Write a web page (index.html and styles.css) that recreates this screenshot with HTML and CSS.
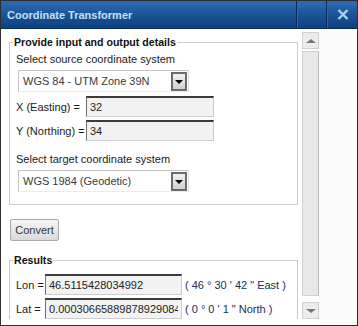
FILE: index.html
```html
<!DOCTYPE html>
<html lang="en">
<head>
    <meta charset="UTF-8">
    <meta name="viewport" content="width=device-width, initial-scale=1.0">
    <title>Coordinate Transformer</title>
    <link rel="stylesheet" href="styles.css">
</head>
<body>
    <div class="dialog">
        <div class="titlebar">
            <span class="title">Coordinate Transformer</span>
            <span class="tb-blank"></span>
            <span class="tb-close">
                <svg width="12" height="11" viewBox="0 0 12 11">
                    <path d="M1.5 1 L10.5 10 M10.5 1 L1.5 10" stroke="#a9d0f0" stroke-width="2.4" fill="none"/>
                </svg>
            </span>
        </div>
        <div class="dialog-body">
            <div class="pane">
                <fieldset class="group">
                    <legend>Provide input and output details</legend>
                    <div class="label">Select source coordinate system</div>
                    <div class="select">
                        <span class="select-text">WGS 84 - UTM Zone 39N</span>
                        <span class="drop"></span>
                    </div>
                    <div class="row">
                        <span class="row-label">X (Easting) =</span>
                        <input class="field" type="text" value="32">
                    </div>
                    <div class="row">
                        <span class="row-label">Y (Northing) =</span>
                        <input class="field" type="text" value="34">
                    </div>
                    <div class="label label-gap">Select target coordinate system</div>
                    <div class="select">
                        <span class="select-text">WGS 1984 (Geodetic)</span>
                        <span class="drop"></span>
                    </div>
                </fieldset>

                <button class="btn">Convert</button>

                <fieldset class="group results">
                    <legend>Results</legend>
                    <div class="row res-row">
                        <span class="row-label">Lon =</span>
                        <input class="field" type="text" value="46.5115428034992">
                        <span class="dms">( 46 ° 30 ' 42 " East )</span>
                    </div>
                    <div class="row res-row">
                        <span class="row-label">Lat =</span>
                        <input class="field" type="text" value="0.00030665889878929084">
                        <span class="dms">( 0 ° 0 ' 1 " North )</span>
                    </div>
                </fieldset>
            </div>
            <div class="scrollbar">
                <div class="sb-btn"><span class="sb-up"></span></div>
                <div class="sb-thumb"></div>
                <div class="sb-btn sb-bottom"><span class="sb-down"></span></div>
            </div>
            <div class="side"></div>
        </div>
    </div>
</body>
</html>
```
FILE: styles.css
```css
body {
    margin: 0;
    padding: 0;
    font-family: "Liberation Sans", Arial, sans-serif;
    font-size: 11px;
    color: #1a1a1a;
    background-color: #fff;
}
.dialog {
    width: 358px;
    height: 326px;
    box-sizing: border-box;
    border: 1px solid #2f2f2f;
    display: flex;
    flex-direction: column;
    background-color: #fff;
}

/* title bar */
.titlebar {
    height: 27px;
    display: flex;
    align-items: stretch;
    background: linear-gradient(#2c6db3, #1a5598 50%, #0f407f);
    border-bottom: 1px solid #0b2c57;
}
.title {
    flex: 1;
    display: flex;
    align-items: center;
    padding-left: 6px;
    font-size: 11px;
    font-weight: bold;
    color: #c3e0f8;
}
.tb-blank {
    width: 29px;
    border-left: 1px solid #0a2a52;
    box-shadow: inset 1px 0 0 #2f6aa6;
}
.tb-close {
    width: 28px;
    border-left: 1px solid #0a2a52;
    box-shadow: inset 1px 0 0 #2f6aa6;
    display: flex;
    align-items: center;
    justify-content: center;
    padding-left: 2px;
}

/* body */
.dialog-body {
    flex: 1;
    display: flex;
}
.pane {
    width: 300px;
    height: 290px;
    overflow: hidden;
    padding-top: 7px;
    box-sizing: border-box;
}
.group {
    margin: 0 0 0 8px;
    width: 289px;
    box-sizing: border-box;
    border: 1px solid #cbcbcb;
    padding: 4px 6px 8px 6px;
}
.group legend {
    font-weight: bold;
    font-size: 10.6px;
    line-height: 13px;
    padding: 0 1px;
    margin-left: -3px;
    color: #111;
}
.label {
    line-height: 13px;
    margin-bottom: 4px;
}
.label-gap {
    margin-top: 12px;
}
.select {
    margin-left: 2px;
    width: 171px;
    height: 22px;
    box-sizing: border-box;
    border: 1px solid #c4c4c4;
    border-bottom-color: #ececec;
    border-right-color: #dcdcdc;
    display: flex;
    align-items: center;
    justify-content: space-between;
    padding: 0 1px 0 4px;
    margin-bottom: 4px;
}
.select-text {
    color: #3a3a3a;
}
.drop {
    width: 16px;
    height: 19px;
    box-sizing: border-box;
    border: 2px solid #6a6a6a;
    background: linear-gradient(#f2f2f2, #cfcfcf);
    position: relative;
}
.drop::after {
    content: "";
    position: absolute;
    left: 2px;
    top: 6px;
    border-left: 4px solid transparent;
    border-right: 4px solid transparent;
    border-top: 4px solid #000;
}
.row {
    display: flex;
    align-items: center;
    height: 21px;
    margin-bottom: 3px;
}
.row-label {
    width: 70px;
    flex-shrink: 0;
}
.field {
    width: 128px;
    height: 21px;
    box-sizing: border-box;
    margin: 0;
    padding: 0 3px;
    font-family: "Liberation Sans", Arial, sans-serif;
    font-size: 11px;
    color: #222;
    background-color: #f2f2f2;
    border: 1px solid #cdcdcd;
    border-top: 2px solid #3a3a3a;
    border-left-color: #6f6f6f;
    outline: none;
}
.btn {
    display: block;
    margin: 14px 0 0 9px;
    width: 49px;
    height: 22px;
    padding: 0;
    font-family: "Liberation Sans", Arial, sans-serif;
    font-size: 11px;
    color: #333;
    background: linear-gradient(#f6f6f6, #dadada);
    border: 1px solid #a9a9a9;
    border-radius: 2px;
}
.results {
    margin-top: 13px;
    padding-top: 7px;
}
.res-row .row-label {
    width: 29px;
}
.res-row .field {
    width: 137px;
}
.dms {
    margin-left: 3px;
    color: #17305a;
    white-space: nowrap;
}

/* fake scrollbar */
.scrollbar {
    width: 17px;
    margin-left: 1px;
    padding-top: 3px;
    display: flex;
    flex-direction: column;
    height: 290px;
    box-sizing: border-box;
}
.sb-btn {
    height: 17px;
    box-sizing: border-box;
    border: 1px solid #cfcfcf;
    background-color: #ececec;
    display: flex;
    align-items: center;
    justify-content: center;
}
.sb-bottom {
    margin-top: 6px;
}
.sb-up {
    border-left: 5px solid transparent;
    border-right: 5px solid transparent;
    border-bottom: 4px solid #6e7884;
}
.sb-down {
    border-left: 5px solid transparent;
    border-right: 5px solid transparent;
    border-top: 4px solid #6e7884;
}
.sb-thumb {
    margin-top: 2px;
    height: 245px;
    box-sizing: border-box;
    border: 1px solid #d0d0d0;
    border-right-color: #b8b8b8;
    background-color: #e8e8e8;
}
.side {
    flex: 1;
    background-color: #fbfbfb;
}
```
